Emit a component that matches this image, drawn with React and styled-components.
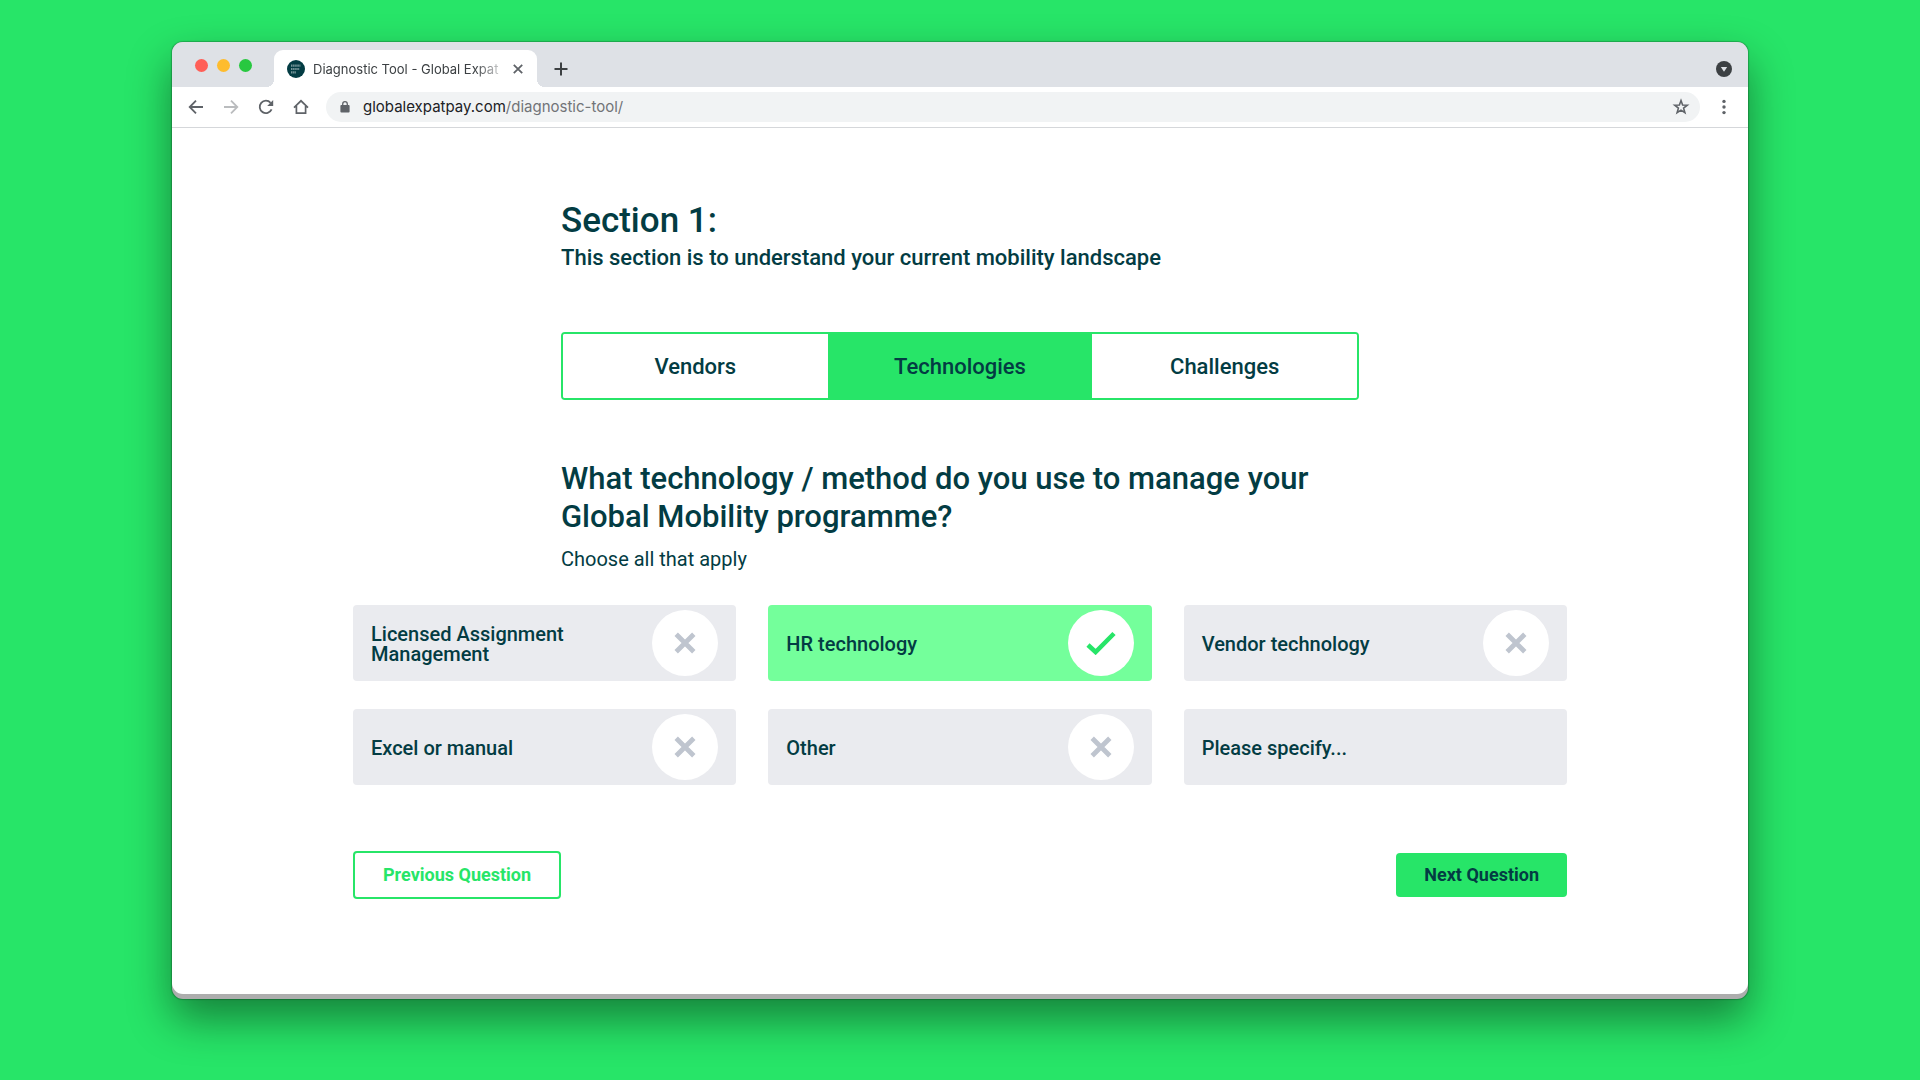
import React, { useState } from "react";
import styled, { createGlobalStyle, css } from "styled-components";

const color = {
  green: "#27e568",
  mint: "#74ff9b",
  ink: "#033c43",
  card: "#eaebef",
  cross: "#bfc5cf",
  chrome: "#dee1e6",
  icon: "#5f6368",
};

const GlobalStyle = createGlobalStyle`
  *, *::before, *::after { box-sizing: border-box; }
  body { margin: 0; background: ${color.green}; }
  button, input { font: inherit; color: inherit; }
  button { cursor: pointer; }
`;

const Desktop = styled.div`
  min-height: 100vh;
  padding: 42px 172px 80px;
  background: ${color.green};
  font-family: Roboto, "Liberation Sans", sans-serif;
  color: ${color.ink};
`;

const Window = styled.div`
  padding-bottom: 5px;
  border-radius: 11px;
  overflow: hidden;
  background: #adadad;
  box-shadow: 0 0 1px 1px rgba(0, 0, 0, 0.22), 0 20px 44px rgba(0, 0, 0, 0.44);
`;

const TabStrip = styled.div`
  display: flex;
  align-items: flex-end;
  height: 45px;
  padding: 0 16px 0 23px;
  background: ${color.chrome};
  font-family: Inter, "Liberation Sans", sans-serif;
`;

const Lights = styled.div`
  display: flex;
  gap: 9px;
  margin-right: 22px;
  padding-bottom: 15px;
`;

const Light = styled.span`
  width: 13px;
  height: 13px;
  border-radius: 50%;
  background: ${(p) => p.$fill};
`;

const BrowserTab = styled.div`
  position: relative;
  display: flex;
  align-items: center;
  gap: 8px;
  width: 263px;
  height: 37px;
  padding: 0 10px 0 13px;
  border-radius: 9px 9px 0 0;
  background: #fff;

  &::before,
  &::after {
    content: "";
    position: absolute;
    bottom: 0;
    width: 8px;
    height: 8px;
  }
  &::before {
    right: 100%;
    background: radial-gradient(circle at 0 0, transparent 8px, #fff 8px);
  }
  &::after {
    left: 100%;
    background: radial-gradient(circle at 100% 0, transparent 8px, #fff 8px);
  }
`;

const Favicon = styled.span`
  display: grid;
  flex: none;
  width: 18px;
  height: 18px;
`;

const TabTitle = styled.span`
  flex: 1;
  white-space: nowrap;
  font-size: 13px;
  line-height: 18px;
  color: #3c4043;
  mask-image: linear-gradient(to right, #000 86%, transparent 104%);
`;

const IconButton = styled.button`
  display: grid;
  place-items: center;
  flex: none;
  width: ${(p) => p.$size || 34}px;
  height: ${(p) => p.$size || 34}px;
  padding: 0;
  border: 0;
  background: none;
  color: ${(p) => (p.$dim ? "#babcbe" : color.icon)};
`;

const StripAction = styled(IconButton)`
  height: 37px;
  color: #3c4043;
  margin-left: ${(p) => (p.$end ? "auto" : "11px")};
`;

const Toolbar = styled.div`
  display: flex;
  align-items: center;
  gap: 1px;
  height: 41px;
  padding: 0 7px;
  border-bottom: 1px solid #d5d7da;
  background: #fff;
`;

const Address = styled.div`
  display: flex;
  flex: 1;
  align-items: center;
  gap: 12px;
  height: 30px;
  margin: 0 6px 0 7px;
  padding: 0 4px 0 13px;
  border-radius: 15px;
  background: #f1f3f4;
  font-family: Inter, "Liberation Sans", sans-serif;
  font-size: 15px;
  line-height: 20px;
  color: #717478;
`;

const Url = styled.a`
  flex: 1;
  color: inherit;
  text-decoration: none;
`;

const Host = styled.span`
  color: #202124;
`;

const Page = styled.main`
  padding: 68px 40px 95px;
  border-radius: 0 0 11px 11px;
  background: #fff;
`;

const Content = styled.div`
  max-width: 1214px;
  margin: 0 auto;
`;

const Column = styled.div`
  max-width: 798px;
  margin: 0 auto;
`;

const SectionTitle = styled.h1`
  margin: 0;
  padding-top: 2px;
  font-size: 35px;
  line-height: 46px;
  font-weight: 500;
`;

const SectionText = styled.p`
  margin: 0 0 60px;
  font-size: 22px;
  line-height: 28px;
  font-weight: 500;
`;

const Tabs = styled.div`
  display: grid;
  grid-template-columns: repeat(3, 1fr);
  border: 2px solid ${color.green};
  border-radius: 4px;
  overflow: hidden;
`;

const Tab = styled.button`
  height: 64px;
  padding: 2px 0 0;
  border: 0;
  background: ${(p) => (p.$active ? color.green : "#fff")};
  font-size: 22px;
  line-height: 28px;
  font-weight: 500;
`;

const Question = styled.h2`
  margin: 60px 0 9px;
  font-size: 31px;
  line-height: 38px;
  font-weight: 500;
`;

const Hint = styled.p`
  margin: 0 0 32px;
  font-size: 20px;
  line-height: 28px;
`;

const Options = styled.div`
  display: grid;
  grid-template-columns: repeat(3, 1fr);
  gap: 28px 32px;
`;

const cardStyle = css`
  min-height: 76px;
  border-radius: 4px;
  font-size: 20px;
  line-height: 20px;
  font-weight: 500;
`;

const OptionCard = styled.label`
  ${cardStyle}
  display: flex;
  align-items: center;
  justify-content: space-between;
  padding: 5px 18px;
  background: ${(p) => (p.$checked ? color.mint : color.card)};
  cursor: pointer;
`;

const OptionText = styled.span`
  max-width: 220px;
  padding-top: 2px;
`;

const Toggle = styled.span`
  display: grid;
  place-items: center;
  flex: none;

  > * {
    grid-area: 1 / 1;
  }
  > svg {
    pointer-events: none;
  }
`;

const Tick = styled.input`
  appearance: none;
  width: 66px;
  height: 66px;
  margin: 0;
  border-radius: 50%;
  background: #fff;
  cursor: pointer;
`;

const Specify = styled.input`
  ${cardStyle}
  width: 100%;
  padding: 2px 18px 0;
  border: 0;
  background: ${color.card};

  &::placeholder {
    color: ${color.ink};
    opacity: 1;
  }
`;

const Actions = styled.div`
  display: flex;
  align-items: center;
  justify-content: space-between;
  margin-top: 66px;
`;

const ActionButton = styled.button`
  padding: 10px 28px;
  border: ${(p) => (p.$outline ? `2px solid ${color.green}` : "0")};
  border-radius: 4px;
  background: ${(p) => (p.$outline ? "#fff" : color.green)};
  color: ${(p) => (p.$outline ? color.green : color.ink)};
  font-size: 18px;
  line-height: 24px;
  font-weight: 700;
`;

const Stroke = ({ d, size = 18, width = 2 }) => (
  <svg width={size} height={size} viewBox="0 0 18 18" fill="none" stroke="currentColor" strokeWidth={width} aria-hidden="true">
    <path d={d} />
  </svg>
);

const Logo = () => (
  <svg width="18" height="18" viewBox="0 0 18 18" aria-hidden="true">
    <circle cx="9" cy="9" r="9" fill={color.ink} />
    <path d="M4 5.6h9.4M4 9h8.6M4 12.4h5" stroke="#a9bec0" strokeWidth="2.2" strokeDasharray="1.5 .6" opacity=".7" />
  </svg>
);

const Reload = () => (
  <svg width="18" height="18" viewBox="0 0 18 18" aria-hidden="true">
    <path d="M14.6 11.4a6.2 6.2 0 1 1-1-6.6" fill="none" stroke="currentColor" strokeWidth="1.8" />
    <path d="M16.2 2v6h-6z" fill="currentColor" />
  </svg>
);

const Lock = () => (
  <svg width="12" height="14" viewBox="0 0 12 14" aria-hidden="true">
    <rect x="1.4" y="5" width="9.2" height="7.6" rx="1" fill={color.icon} />
    <path d="M3.7 5.5V3.9a2.3 2.3 0 0 1 4.6 0v1.6" fill="none" stroke={color.icon} strokeWidth="1.3" />
  </svg>
);

const Star = () => (
  <svg width="18" height="18" viewBox="0 0 18 18" aria-hidden="true">
    <path d="M9 2.6l1.6 4.4 4.7.2-3.7 2.9 1.3 4.6L9 12.1l-3.9 2.6 1.3-4.6L2.700 7.200l4.700-.2z" fill="none" stroke="currentColor" strokeWidth="1.6" />
  </svg>
);

const Dots = () => (
  <svg width="18" height="18" viewBox="0 0 18 18" fill="currentColor" aria-hidden="true">
    <circle cx="9" cy="3.4" r="1.7" />
    <circle cx="9" cy="9" r="1.7" />
    <circle cx="9" cy="14.6" r="1.7" />
  </svg>
);

const TabSearch = () => (
  <svg width="16" height="16" viewBox="0 0 16 16" aria-hidden="true">
    <circle cx="8" cy="8" r="8" fill="currentColor" />
    <path d="M4.8 6h6.4L8 10.8z" fill={color.chrome} />
  </svg>
);

const Cross = () => (
  <svg width="22" height="22" viewBox="0 0 22 22" aria-hidden="true">
    <path d="M2.200 2.200l17.600 17.600M19.800 2.200L2.200 19.800" stroke={color.cross} strokeWidth="4.800" />
  </svg>
);

const Check = () => (
  <svg width="30" height="24" viewBox="0 0 30 24" aria-hidden="true">
    <path d="M2 14l7.600 7L28 2.500" fill="none" stroke={color.green} strokeWidth="4.600" />
  </svg>
);

const options = ["Licensed Assignment Management", "HR technology", "Vendor technology", "Excel or manual", "Other"];
const steps = ["Vendors", "Technologies", "Challenges"];

export default function App() {
  const [step, setStep] = useState("Technologies");
  const [chosen, setChosen] = useState(["HR technology"]);
  const toggle = (name) =>
    setChosen((list) => (list.includes(name) ? list.filter((n) => n !== name) : [...list, name]));

  return (
    <Desktop>
      <GlobalStyle />
      <Window>
        <TabStrip>
          <Lights>
            <Light $fill="#ff5f57" />
            <Light $fill="#febc2e" />
            <Light $fill="#28c840" />
          </Lights>
          <BrowserTab>
            <Favicon><Logo /></Favicon>
            <TabTitle>Diagnostic Tool - Global Expat</TabTitle>
            <IconButton $size={18} aria-label="Close tab">
              <Stroke d="M4.800 4.800l8.400 8.400M13.200 4.800l-8.400 8.400" width={1.8} />
            </IconButton>
          </BrowserTab>
          <StripAction $size={26} aria-label="New tab">
            <Stroke d="M9 2.500v13M2.500 9h13" />
          </StripAction>
          <StripAction $size={16} $end aria-label="Search tabs">
            <TabSearch />
          </StripAction>
        </TabStrip>
        <Toolbar>
          <IconButton aria-label="Back"><Stroke d="M16 9H3M9 2.700L2.700 9 9 15.300" width={1.8} /></IconButton>
          <IconButton $dim aria-label="Forward"><Stroke d="M2 9h13M9 2.700L15.300 9 9 15.300" width={1.8} /></IconButton>
          <IconButton aria-label="Reload"><Reload /></IconButton>
          <IconButton aria-label="Home"><Stroke d="M2 9.600L9 2.800l7 6.800M4.400 8v7.200h9.200V8" width={1.7} /></IconButton>
          <Address>
            <Lock />
            <Url href="#diagnostic-tool"><Host>globalexpatpay.com</Host>/diagnostic-tool/</Url>
            <IconButton $size={30} aria-label="Bookmark"><Star /></IconButton>
          </Address>
          <IconButton aria-label="Menu"><Dots /></IconButton>
        </Toolbar>
        <Page>
          <Content>
            <Column>
              <SectionTitle>Section 1:</SectionTitle>
              <SectionText>This section is to understand your current mobility landscape</SectionText>
              <Tabs>
                {steps.map((name) => (
                  <Tab key={name} $active={name === step} onClick={() => setStep(name)}>{name}</Tab>
                ))}
              </Tabs>
              <Question>What technology / method do you use to manage your Global Mobility programme?</Question>
              <Hint>Choose all that apply</Hint>
            </Column>
            <Options>
              {options.map((name) => {
                const checked = chosen.includes(name);
                return (
                  <OptionCard key={name} $checked={checked}>
                    <OptionText>{name}</OptionText>
                    <Toggle>
                      <Tick type="checkbox" checked={checked} onChange={() => toggle(name)} />
                      {checked ? <Check /> : <Cross />}
                    </Toggle>
                  </OptionCard>
                );
              })}
              <Specify type="text" placeholder="Please specify..." aria-label="Please specify" />
            </Options>
            <Actions>
              <ActionButton $outline>Previous Question</ActionButton>
              <ActionButton>Next Question</ActionButton>
            </Actions>
          </Content>
        </Page>
      </Window>
    </Desktop>
  );
}
